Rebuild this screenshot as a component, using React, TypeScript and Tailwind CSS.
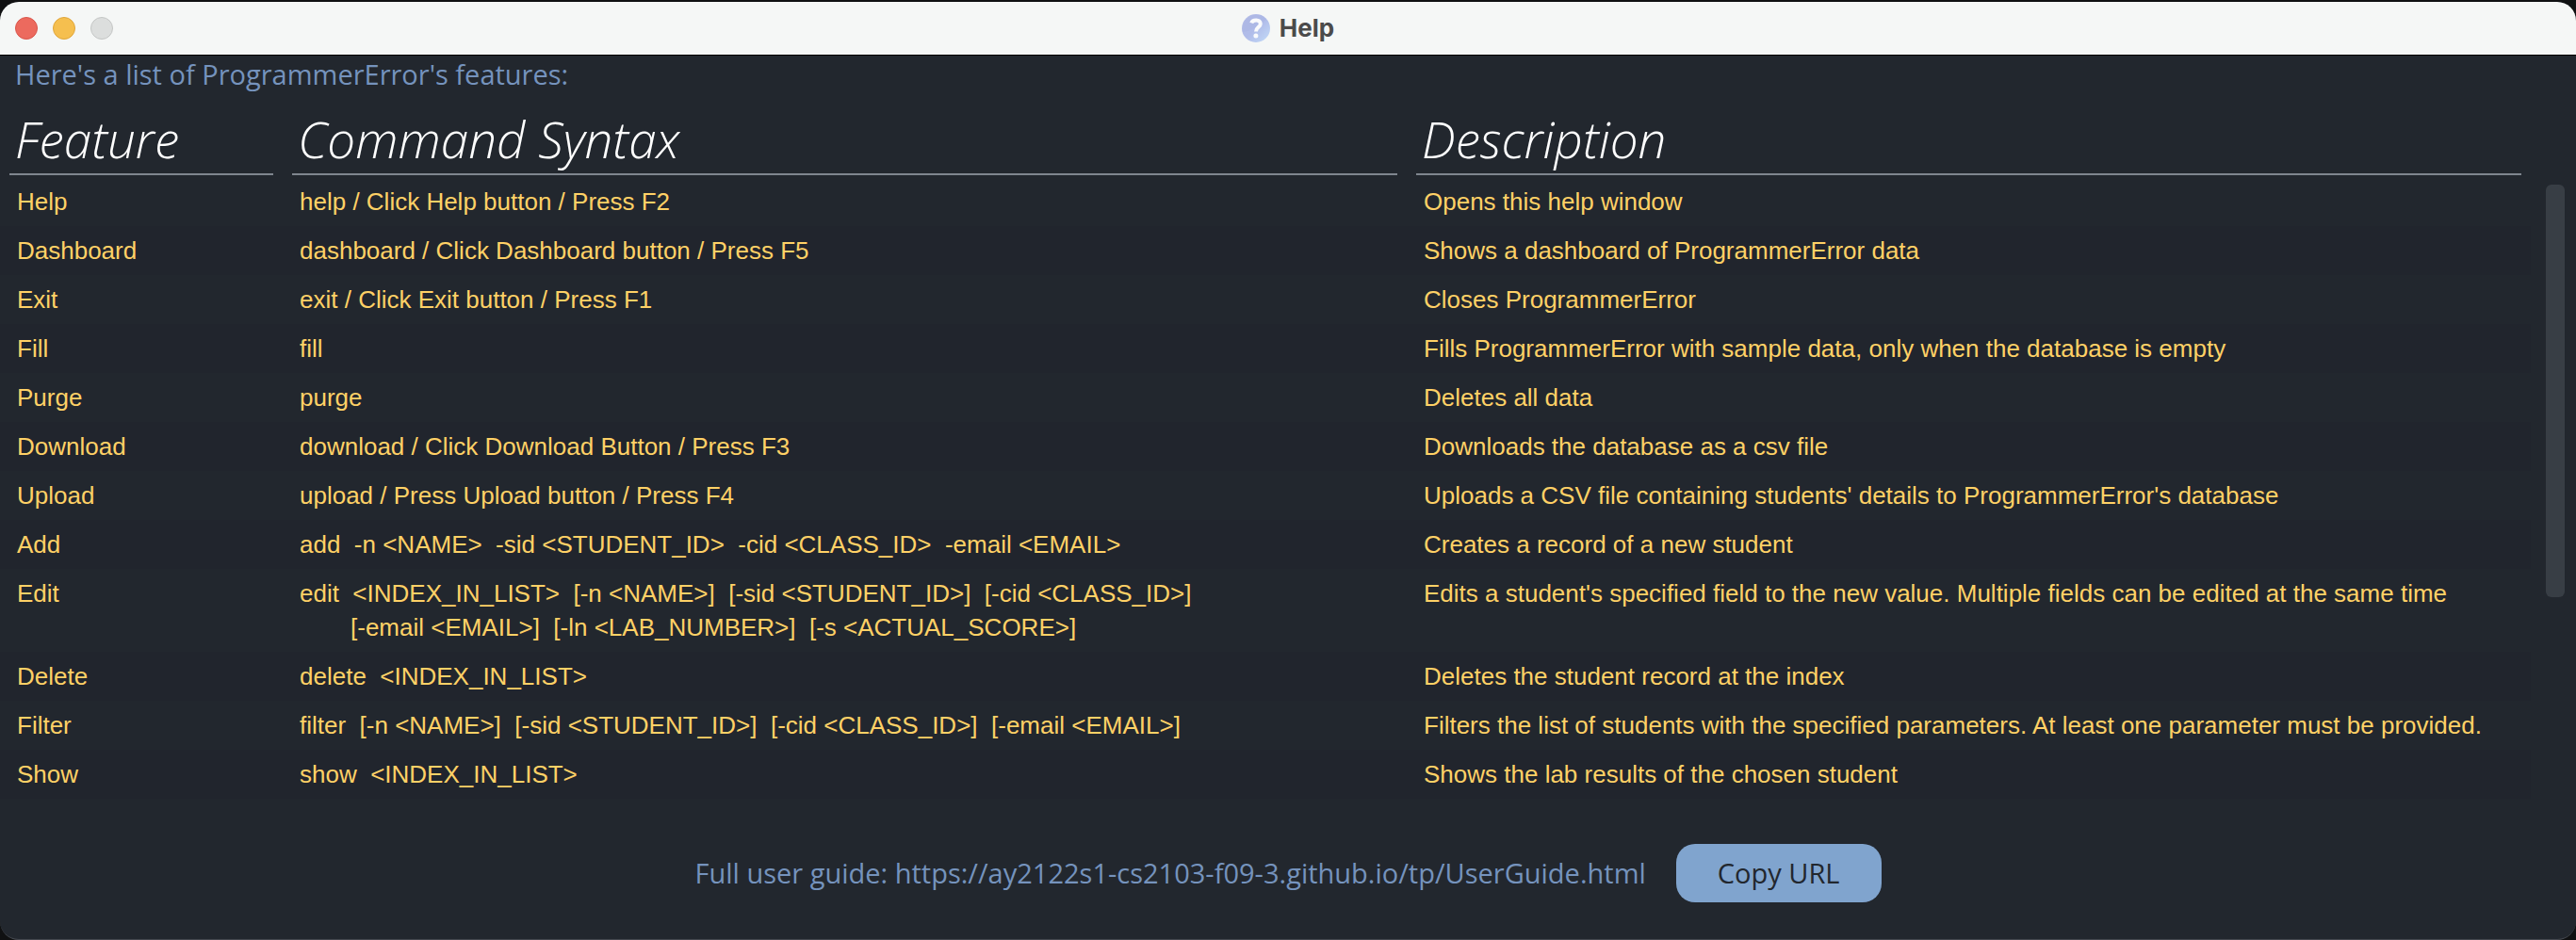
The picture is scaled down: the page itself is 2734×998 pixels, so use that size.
import type { ReactNode } from "react";

type Feature = { name: string; syntax: ReactNode; description: string };

const features: Feature[] = [
  { name: "Help", syntax: "help / Click Help button / Press F2", description: "Opens this help window" },
  { name: "Dashboard", syntax: "dashboard / Click Dashboard button / Press F5", description: "Shows a dashboard of ProgrammerError data" },
  { name: "Exit", syntax: "exit / Click Exit button / Press F1", description: "Closes ProgrammerError" },
  { name: "Fill", syntax: "fill", description: "Fills ProgrammerError with sample data, only when the database is empty" },
  { name: "Purge", syntax: "purge", description: "Deletes all data" },
  { name: "Download", syntax: "download / Click Download Button / Press F3", description: "Downloads the database as a csv file" },
  { name: "Upload", syntax: "upload / Press Upload button / Press F4", description: "Uploads a CSV file containing students' details to ProgrammerError's database" },
  { name: "Add", syntax: "add  -n <NAME>  -sid <STUDENT_ID>  -cid <CLASS_ID>  -email <EMAIL>", description: "Creates a record of a new student" },
  {
    name: "Edit",
    syntax: (
      <>
        {"edit  <INDEX_IN_LIST>  [-n <NAME>]  [-sid <STUDENT_ID>]  [-cid <CLASS_ID>]"}
        <span className="block pl-[54px]">{"[-email <EMAIL>]  [-ln <LAB_NUMBER>]  [-s <ACTUAL_SCORE>]"}</span>
      </>
    ),
    description: "Edits a student's specified field to the new value. Multiple fields can be edited at the same time",
  },
  { name: "Delete", syntax: "delete  <INDEX_IN_LIST>", description: "Deletes the student record at the index" },
  { name: "Filter", syntax: "filter  [-n <NAME>]  [-sid <STUDENT_ID>]  [-cid <CLASS_ID>]  [-email <EMAIL>]", description: "Filters the list of students with the specified parameters. At least one parameter must be provided." },
  { name: "Show", syntax: "show  <INDEX_IN_LIST>", description: "Shows the lab results of the chosen student" },
];

const guideUrl = "https://ay2122s1-cs2103-f09-3.github.io/tp/UserGuide.html";

function HelpIcon() {
  return (
    <svg viewBox="0 0 30 30" className="size-[30px]" aria-hidden="true">
      <defs>
        <linearGradient id="disc" x1="0" y1="0" x2="1" y2="1">
          <stop offset="0" stopColor="#b3bce6" />
          <stop offset="0.5" stopColor="#b0bce9" />
          <stop offset="1" stopColor="#c3dcf8" />
        </linearGradient>
      </defs>
      <circle cx="15" cy="15" r="15" fill="url(#disc)" />
      <path d="M1 19C9 18 19 14 26 5A15 15 0 0 0 1 19Z" fill="#a9b3e2" opacity="0.45" />
      <path d="M10.2 9.4C11.4 5.4 19.8 5.2 19.8 10.2C19.8 14 15 13.8 15 18.6" fill="none" stroke="#f9fafc" strokeWidth="4" />
      <circle cx="14.9" cy="23" r="2.5" fill="#f9fafc" />
    </svg>
  );
}

function TitleBar() {
  return (
    <header className="grid h-14 grid-cols-[1fr_auto_1fr] items-center bg-[#f5f7f6] px-4">
      <div className="flex gap-4">
        <button aria-label="Close" className="size-6 rounded-full border border-[#d9564c] bg-[#ec6a5e]" />
        <button aria-label="Minimize" className="size-6 rounded-full border border-[#dfa53a] bg-[#f5bf4f]" />
        <button aria-label="Zoom" disabled className="size-6 rounded-full border border-[#c4c6c5] bg-[#dcdedd]" />
      </div>
      <div className="flex items-center gap-2.5">
        <HelpIcon />
        <h1 className="font-['Inter',sans-serif] text-[26px] leading-8 font-bold text-[#4b4b4b]">Help</h1>
      </div>
    </header>
  );
}

export default function App() {
  return (
    <div className="min-h-screen bg-[#101112] pt-0.5">
      <main className="flex min-h-[calc(100vh-2px)] flex-col overflow-hidden rounded-[20px] border-b border-[#44484f] bg-[#22272e] font-['Open_Sans',sans-serif] text-[29px]">
        <TitleBar />
        <p className="border-t border-black px-4 leading-10 text-[#7593bd]">Here's a list of ProgrammerError's features:</p>
        <div className="mt-[13px] flex">
          <table className="w-full table-fixed border-collapse text-left">
            <colgroup>
              <col className="w-[300px]" />
              <col />
              <col />
            </colgroup>
            <thead>
              <tr className="text-[53px] leading-[72px] text-white italic">
                {["Feature", "Command Syntax", "Description"].map((title) => (
                  <th key={title} scope="col" className="px-2.5 pb-0.5 font-light">
                    <div className="border-b-2 border-[#7f868e] px-1.5">{title}</div>
                  </th>
                ))}
              </tr>
            </thead>
            <tbody className="font-['Liberation_Sans',sans-serif] text-[26px] leading-9 text-[#ffd166]">
              {features.map((feature) => (
                <tr key={feature.name} className="align-top even:bg-[#21252d]">
                  <td className="px-[18px] py-2">{feature.name}</td>
                  <td className="px-[18px] py-2 whitespace-pre">{feature.syntax}</td>
                  <td className="px-[18px] py-2 whitespace-nowrap">{feature.description}</td>
                </tr>
              ))}
            </tbody>
          </table>
          <div className="w-12 shrink-0 pt-[84px] pl-4">
            <div className="h-[438px] w-5 rounded-md bg-[#383e45]" />
          </div>
        </div>
        <footer className="mt-12 flex items-center justify-center gap-8">
          <p className="text-[#7593bd]">Full user guide: {guideUrl}</p>
          <button
            className="h-[62px] rounded-[20px] bg-[#80a4ce] px-11 text-[#22272e]"
            onClick={() => navigator.clipboard.writeText(guideUrl)}
          >
            Copy URL
          </button>
        </footer>
      </main>
    </div>
  );
}
